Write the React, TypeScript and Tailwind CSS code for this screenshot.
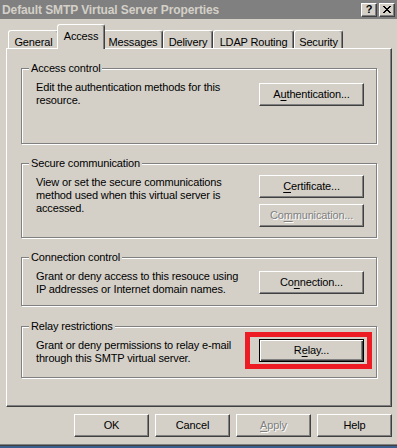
import type { ReactNode } from "react";

function Btn({
  children,
  wide,
  disabled,
  primary,
}: {
  children: ReactNode;
  wide?: boolean;
  disabled?: boolean;
  primary?: boolean;
}) {
  const size = wide ? "w-[105px] h-[23px]" : "w-[75px] h-[23px]";
  const frame = primary
    ? "border border-black shadow-[inset_1px_1px_0_#fff,inset_-1px_-1px_0_#404040,inset_-2px_-2px_0_#808080]"
    : "border border-t-white border-l-white border-r-[#404040] border-b-[#404040] shadow-[inset_-1px_-1px_0_#808080]";
  const text = disabled
    ? "text-[#808080] [text-shadow:1px_1px_0_#fff]"
    : "text-black";
  return (
    <div
      className={`${size} ${frame} ${text} flex shrink-0 items-center justify-center bg-[#d4d0c8] pb-px`}
    >
      {children}
    </div>
  );
}

function Key({ children }: { children: ReactNode }) {
  return <span className="underline underline-offset-[2px]">{children}</span>;
}

function Group({
  label,
  height,
  btnTop,
  children,
  buttons,
}: {
  label: string;
  height: string;
  btnTop: string;
  children: ReactNode;
  buttons: ReactNode;
}) {
  return (
    <div
      className={`relative flex w-[356px] ${height} border border-[#808080] shadow-[1px_1px_0_#fff,inset_1px_1px_0_#fff] pl-[14px] pt-[12px]`}
    >
      <span className="absolute left-[7px] top-[-7px] bg-[#d4d0c8] px-[2px] leading-[13px]">
        {label}
      </span>
      <p className="w-[223px] leading-[13px]">{children}</p>
      <div className={`flex flex-col gap-[6px] ${btnTop}`}>{buttons}</div>
    </div>
  );
}

const tabs = [
  { name: "General", w: "w-[51px]" },
  { name: "Access", w: "w-[44px]", active: true },
  { name: "Messages", w: "w-[60px]" },
  { name: "Delivery", w: "w-[50px]" },
  { name: "LDAP Routing", w: "w-[81px]" },
  { name: "Security", w: "w-[49px]" },
];

export default function App() {
  return (
    <div className="flex h-[448px] w-[397px] flex-col overflow-hidden bg-[#d4d0c8] font-['Liberation_Sans',Arial,sans-serif] text-[11px] tracking-[-0.15px] text-black">
      {/* title bar */}
      <div className="flex h-[19px] shrink-0 items-center justify-between bg-[#808080] pl-[2px] pr-[2px]">
        <span className="text-[12px] font-bold tracking-[-0.1px] text-[#d4d0c8]">
          Default SMTP Virtual Server Properties
        </span>
        <div className="flex gap-[2px]">
          <div className="flex h-[14px] w-[16px] items-center justify-center border border-t-white border-l-white border-r-[#404040] border-b-[#404040] bg-[#d4d0c8] text-[11px] font-bold leading-none shadow-[inset_-1px_-1px_0_#808080]">
            ?
          </div>
          <div className="flex h-[14px] w-[16px] items-center justify-center border border-t-white border-l-white border-r-[#404040] border-b-[#404040] bg-[#d4d0c8] shadow-[inset_-1px_-1px_0_#808080]">
            <svg width="8" height="7" viewBox="0 0 8 7" shapeRendering="crispEdges">
              <path
                d="M0 0h2v1H0zM6 0h2v1H6zM1 1h2v1H1zM5 1h2v1H5zM2 2h4v1H2zM3 3h2v1H3zM2 4h4v1H2zM1 5h2v1H1zM5 5h2v1H5zM0 6h2v1H0zM6 6h2v1H6z"
                fill="#000"
              />
            </svg>
          </div>
        </div>
      </div>

      {/* tabs */}
      <div className="mt-[9px] flex h-[20px] shrink-0 items-end pl-[8px]">
        {tabs.map((t) =>
          t.active ? (
            <div
              key={t.name}
              className={`relative z-10 -mx-[2px] -mb-px flex h-[21px] ${t.w} box-content items-start justify-center rounded-t-[3px] border-l border-t border-r border-l-white border-t-white border-r-[#404040] bg-[#d4d0c8] px-[1px] pt-[3px] shadow-[inset_-1px_0_0_#808080]`}
            >
              {t.name}
            </div>
          ) : (
            <div
              key={t.name}
              className={`flex h-[18px] ${t.w} items-start justify-center rounded-t-[3px] border-l border-t border-r border-l-white border-t-white border-r-[#404040] pt-[3px] shadow-[inset_-1px_0_0_#808080]`}
            >
              {t.name}
            </div>
          )
        )}
      </div>

      {/* panel */}
      <div className="ml-[6px] flex h-[359px] w-[386px] shrink-0 flex-col border border-t-white border-l-white border-r-[#404040] border-b-[#404040] pl-[14px] pt-[19px] shadow-[inset_-1px_-1px_0_#808080]">
        <Group
          label="Access control"
          height="h-[76px]"
          btnTop="mt-[2px]"
          buttons={
            <Btn wide>
              A<Key>u</Key>thentication...
            </Btn>
          }
        >
          Edit the authentication methods for this
          <br />
          resource.
        </Group>

        <div className="mt-[19px]">
          <Group
            label="Secure communication"
            height="h-[75px]"
            btnTop="-mt-[1px]"
            buttons={
              <>
                <Btn wide>
                  <Key>C</Key>ertificate...
                </Btn>
                <Btn wide disabled>
                  Co<Key>m</Key>munication...
                </Btn>
              </>
            }
          >
            View or set the secure communications
            <br />
            method used when this virtual server is
            <br />
            accessed.
          </Group>
        </div>

        <div className="mt-[19px]">
          <Group
            label="Connection control"
            height="h-[49px]"
            btnTop="mt-[1px]"
            buttons={
              <Btn wide>
                Co<Key>n</Key>nection...
              </Btn>
            }
          >
            Grant or deny access to this resouce using
            <br />
            IP addresses or Internet domain names.
          </Group>
        </div>

        <div className="mt-[20px]">
          <Group
            label="Relay restrictions"
            height="h-[52px]"
            btnTop="mt-0"
            buttons={
              <div className="relative">
                <Btn wide primary>
                  R<Key>e</Key>lay...
                </Btn>
                <div className="pointer-events-none absolute left-[-14px] top-[-7px] h-[37px] w-[127px] border-[5px] border-[#ed1c24]" />
              </div>
            }
          >
            Grant or deny permissions to relay e-mail
            <br />
            through this SMTP virtual server.
          </Group>
        </div>
      </div>

      {/* dialog buttons */}
      <div className="mt-[7px] flex shrink-0 gap-[6px] pl-[74px]">
        <Btn>OK</Btn>
        <Btn>Cancel</Btn>
        <Btn disabled>
          <Key>A</Key>pply
        </Btn>
        <Btn>Help</Btn>
      </div>

      {/* edge of the desktop below the window */}
      <div className="mt-auto flex shrink-0 flex-col">
        <div className="h-px bg-[#808080]" />
        <div className="h-px bg-[#404040]" />
        <div className="h-[2px] bg-[#3a5f8f]" />
      </div>
    </div>
  );
}
